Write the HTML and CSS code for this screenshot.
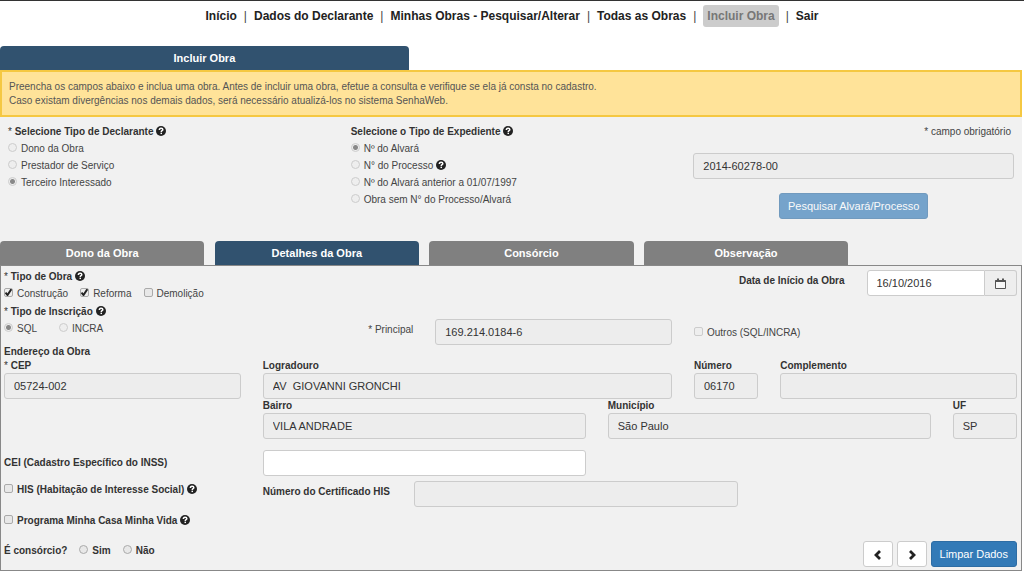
FILE: index.html
```html
<!DOCTYPE html>
<html lang="pt-BR">
<head>
<meta charset="utf-8">
<title>Incluir Obra</title>
<link rel="stylesheet" href="styles.css">
</head>
<body>
<svg class="sprite" aria-hidden="true">
  <symbol id="help" viewBox="0 0 12 12"><circle cx="6" cy="6" r="6" fill="#222"/><path d="M4 4.8C4 3.4 4.9 2.7 6.1 2.7S8.2 3.4 8.2 4.5C8.2 5.7 6.3 5.7 6.3 7.1" fill="none" stroke="#fff" stroke-width="1.8"/><rect x="5.4" y="8" width="1.8" height="1.7" fill="#fff"/></symbol>
</svg>
<nav class="menu">
  <a href="#">Início</a><span>|</span><a href="#">Dados do Declarante</a><span>|</span><a href="#">Minhas Obras - Pesquisar/Alterar</a><span>|</span><a href="#">Todas as Obras</a><span>|</span><a href="#" class="current">Incluir Obra</a><span>|</span><a href="#">Sair</a>
</nav>
<main class="page">
  <h1 class="page-tab">Incluir Obra</h1>
  <p class="notice">Preencha os campos abaixo e inclua uma obra. Antes de incluir uma obra, efetue a consulta e verifique se ela já consta no cadastro.<br>Caso existam divergências nos demais dados, será necessário atualizá-los no sistema SenhaWeb.</p>

  <form class="content">
    <div class="search">
      <div class="choices" role="group" aria-label="Tipo de Declarante">
        <h2 class="title"><span class="star">*</span> Selecione Tipo de Declarante <svg class="help"><use href="#help"/></svg></h2>
        <label class="option"><input type="radio" name="decl" disabled>Dono da Obra</label>
        <label class="option"><input type="radio" name="decl" disabled>Prestador de Serviço</label>
        <label class="option"><input type="radio" name="decl" disabled checked>Terceiro Interessado</label>
      </div>
      <div class="choices" role="group" aria-label="Tipo de Expediente">
        <h2 class="title">Selecione o Tipo de Expediente <svg class="help"><use href="#help"/></svg></h2>
        <label class="option"><input type="radio" name="exp" disabled checked>Nº do Alvará</label>
        <label class="option"><input type="radio" name="exp" disabled><span>N° do Processo <svg class="help"><use href="#help"/></svg></span></label>
        <label class="option"><input type="radio" name="exp" disabled>Nº do Alvará anterior a 01/07/1997</label>
        <label class="option"><input type="radio" name="exp" disabled>Obra sem N° do Processo/Alvará</label>
      </div>
      <div class="lookup">
        <p class="required">* campo obrigatório</p>
        <input class="field" type="text" value="2014-60278-00" aria-label="Número do Alvará" disabled>
        <button class="btn primary" type="button" disabled>Pesquisar Alvará/Processo</button>
      </div>
    </div>

    <div class="tabs" role="tablist">
      <button type="button" class="tab" role="tab">Dono da Obra</button>
      <button type="button" class="tab active" role="tab" aria-selected="true">Detalhes da Obra</button>
      <button type="button" class="tab" role="tab">Consórcio</button>
      <button type="button" class="tab" role="tab">Observação</button>
    </div>

    <section class="panel">
      <div class="row kind">
        <div class="span-4">
          <h2 class="title"><span class="star">*</span> Tipo de Obra <svg class="help"><use href="#help"/></svg></h2>
          <div class="inline">
            <label class="option"><input type="checkbox" checked>Construção</label>
            <label class="option"><input type="checkbox" checked>Reforma</label>
            <label class="option"><input type="checkbox">Demolição</label>
          </div>
        </div>
        <label class="side-label title from-5 span-6" for="data">Data de Início da Obra</label>
        <div class="date span-2">
          <input class="field" type="text" id="data" value="16/10/2016">
          <button type="button" class="calendar" aria-label="Abrir calendário"><svg viewBox="0 0 11 11"><path d="M.5 2.5h10v8H.5z" fill="#f8f8f8" stroke="#555"/><path d="M.5 2h10v2H.5zM2 .5h2v2H2zM7 .5h2v2H7z" fill="#555"/></svg></button>
        </div>
      </div>

      <div class="row registry">
        <div class="span-3">
          <h2 class="title"><span class="star">*</span> Tipo de Inscrição <svg class="help"><use href="#help"/></svg></h2>
          <div class="inline wide">
            <label class="option"><input type="radio" name="insc" disabled checked>SQL</label>
            <label class="option"><input type="radio" name="insc" disabled>INCRA</label>
          </div>
        </div>
        <label class="side-label span-2" for="principal">* Principal</label>
        <input class="field span-3" type="text" id="principal" value="169.214.0184-6" disabled>
        <label class="option others span-4"><input type="checkbox" disabled>Outros (SQL/INCRA)</label>
      </div>

      <h2 class="title address">Endereço da Obra</h2>
      <div class="row">
        <div class="group span-3"><label class="title" for="cep"><span class="star">*</span> CEP</label><input class="field" type="text" id="cep" value="05724-002" disabled></div>
        <div class="group span-5"><label class="title" for="log">Logradouro</label><input class="field" type="text" id="log" value="AV  GIOVANNI GRONCHI" disabled></div>
        <div class="group span-1"><label class="title" for="num">Número</label><input class="field" type="text" id="num" value="06170" disabled></div>
        <div class="group span-3"><label class="title" for="comp">Complemento</label><input class="field" type="text" id="comp" disabled></div>
      </div>
      <div class="row">
        <div class="group from-4 span-4"><label class="title" for="bairro">Bairro</label><input class="field" type="text" id="bairro" value="VILA ANDRADE" disabled></div>
        <div class="group span-4"><label class="title" for="mun">Município</label><input class="field" type="text" id="mun" value="São Paulo" disabled></div>
        <div class="group span-1"><label class="title" for="uf">UF</label><input class="field" type="text" id="uf" value="SP" disabled></div>
      </div>
      <div class="row cei">
        <label class="title span-3" for="cei">CEI (Cadastro Específico do INSS)</label>
        <input class="field span-4" type="text" id="cei">
      </div>
      <div class="row his">
        <label class="option title span-3"><input type="checkbox"><span>HIS (Habitação de Interesse Social) <svg class="help"><use href="#help"/></svg></span></label>
        <div class="certificate from-4 span-9">
          <label class="title" for="cert">Número do Certificado HIS</label>
          <input class="field" type="text" id="cert" disabled>
        </div>
      </div>
      <div class="program">
        <label class="option title"><input type="checkbox"><span>Programa Minha Casa Minha Vida <svg class="help"><use href="#help"/></svg></span></label>
      </div>
      <div class="footer">
        <div class="inline consortium">
          <span class="title">É consórcio?</span>
          <label class="option title"><input type="radio" name="cons">Sim</label>
          <label class="option title"><input type="radio" name="cons">Não</label>
        </div>
        <div class="actions">
          <button type="button" class="btn arrow" aria-label="Anterior"><svg viewBox="0 0 10 10"><path d="M7 1 3 5l4 4" fill="none" stroke="#222" stroke-width="2.8"/></svg></button>
          <button type="button" class="btn arrow" aria-label="Próximo"><svg viewBox="0 0 10 10"><path d="m3 1 4 4-4 4" fill="none" stroke="#222" stroke-width="2.8"/></svg></button>
          <button type="button" class="btn primary">Limpar Dados</button>
        </div>
      </div>
    </section>
  </form>
</main>
</body>
</html>
```
FILE: styles.css
```css
* { box-sizing: border-box; }
body {
  margin: 0;
  border-top: 1px solid #333;
  background: #fff;
  color: #444;
  font: 10px/14px "Liberation Sans", Arial, sans-serif;
}
h1, h2, p { margin: 0; }
button, input { font-family: inherit; margin: 0; }
.sprite { display: none; }

.menu {
  display: flex;
  justify-content: center;
  align-items: center;
  gap: 7px;
  height: 45px;
  padding-bottom: 15px;
  font-size: 12px;
}
.menu a { color: #222; font-weight: bold; text-decoration: none; }
.menu .current {
  padding: 4px;
  border-radius: 3px;
  background: #ccc;
  color: #777;
}

.page { padding-right: 2px; }
.page-tab {
  width: 40%;
  border-radius: 4px 4px 0 0;
  background: #31526f;
  color: #fff;
  font-size: 11px;
  line-height: 24px;
  text-align: center;
}
.notice {
  padding: 8px 7px 7px;
  border: 2px solid #f5c842;
  background: #ffe399;
  color: #555;
  line-height: 14px;
}
.content { background: #f1f1f1; }

.search {
  display: grid;
  grid-template-columns: repeat(3, 1fr);
  column-gap: 22px;
  height: 124px;
  padding: 6px 8px 0;
}
.title { font-size: 10px; font-weight: bold; color: #333; }
.star { font-weight: normal; }
.help { width: 10px; height: 10px; vertical-align: -1px; }
.search .title { line-height: 17px; }
.option { display: flex; align-items: center; gap: 4px; line-height: 17px; }
.option input {
  appearance: none;
  flex: none;
  width: 9px;
  height: 9px;
  margin-bottom: 3px;
  border: 1px solid #aaa;
  background: #e8e8e8;
}
.option input[type="checkbox"] { border-radius: 2px; }
.option input[type="radio"] { border-radius: 50%; }
.option input:disabled { border-color: #ccc; background-color: #eee; }
.option input[type="radio"]:checked { background: radial-gradient(circle, #888 2px, #eee 3px); }
.option input[type="checkbox"]:checked {
  background: url("data:image/svg+xml,%3Csvg xmlns='http://www.w3.org/2000/svg' viewBox='0 0 9 9'%3E%3Cpath d='M1.5 4.5l2 2.5 4-6' fill='none' stroke='%23222' stroke-width='2'/%3E%3C/svg%3E") center / 9px #eee;
}
.lookup { display: flex; flex-direction: column; align-items: center; }
.required { align-self: flex-end; padding-right: 3px; line-height: 17px; }
.lookup .field { margin: 13px 0 14px; }

.field {
  width: 100%;
  min-width: 0;
  height: 26px;
  padding: 0 9px;
  border: 1px solid #ccc;
  border-radius: 3px;
  background: #fff;
  color: #333;
  font-size: 11px;
  white-space: pre;
}
.field:disabled { background: #ededed; }
.btn {
  height: 26px;
  padding: 0 8px;
  border: 1px solid #ccc;
  border-radius: 3px;
  background: #fff;
  font-size: 11px;
}
.btn.primary { border-color: #2e6da4; background: #337ab7; color: #fff; }
.btn:disabled { opacity: .65; }

.tabs { display: flex; gap: 1%; }
.tab {
  width: 20%;
  height: 24px;
  padding: 0;
  border: 0;
  border-radius: 4px 4px 0 0;
  background: #808080;
  color: #fff;
  font-size: 11px;
  font-weight: bold;
}
.tab.active { background: #31526f; }

.panel { padding: 2px 4px 3px 3px; border: 1px solid #888; }
.row {
  display: grid;
  grid-template-columns: repeat(12, 1fr);
  column-gap: 22px;
}
.span-1 { grid-column-end: span 1; }
.span-2 { grid-column-end: span 2; }
.span-3 { grid-column-end: span 3; }
.span-4 { grid-column-end: span 4; }
.span-5 { grid-column-end: span 5; }
.span-6 { grid-column-end: span 6; }
.span-9 { grid-column-end: span 9; }
.from-4 { grid-column-start: 4; }
.from-5 { grid-column-start: 5; }

.inline { display: flex; gap: 12px; }
.inline.wide { gap: 22px; }
.kind .title, .registry .title { line-height: 17px; }
.side-label { text-align: right; }
.kind .side-label { padding-top: 4px; }
.date { display: flex; height: 26px; margin-top: 2px; }
.date .field { flex: 1; border-radius: 3px 0 0 3px; }
.calendar {
  display: grid;
  place-items: center;
  width: 32px;
  padding: 0;
  border: 1px solid #ccc;
  border-left: 0;
  border-radius: 0 3px 3px 0;
  background: #eee;
}
.calendar svg { width: 11px; height: 11px; }
.registry { align-items: end; padding-top: 1px; }
.registry > div { align-self: start; }
.registry .side-label { padding-bottom: 8px; }
.registry .field { margin-top: 16px; }
.others { padding-bottom: 4px; }
.group { display: flex; flex-direction: column; }
.cei { align-items: center; margin-top: 11px; }
.his { margin-top: 5px; }
.his .option { align-self: start; }
.certificate { display: grid; grid-template-columns: 20% 43%; }
.certificate .title { padding-top: 4px; }
.program { padding-top: 5px; }
.footer { display: flex; justify-content: space-between; margin-top: 12px; }
.consortium { align-self: flex-start; align-items: center; padding-top: 1px; }
.actions { display: flex; gap: 4px; }
.arrow { width: 30px; padding: 0; }
.arrow svg { width: 10px; height: 10px; vertical-align: middle; }
```
